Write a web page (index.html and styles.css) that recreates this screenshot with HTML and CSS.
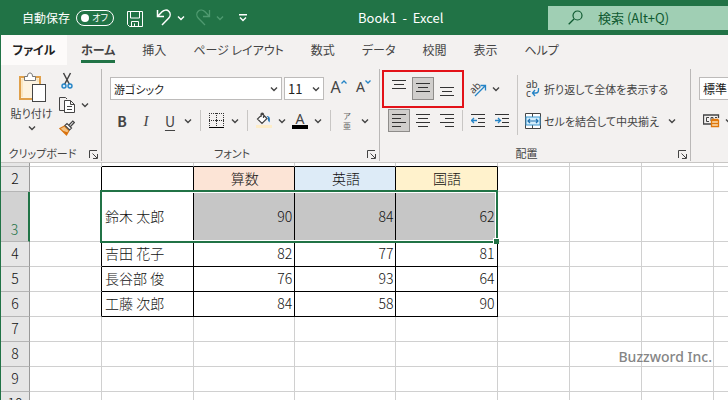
FILE: index.html
```html
<!DOCTYPE html>
<html lang="ja">
<head>
<meta charset="utf-8">
<title>Book1 - Excel</title>
<link rel="stylesheet" href="styles.css">
</head>
<body>
<svg class="defs" aria-hidden="true">
  <symbol id="chev" viewBox="0 0 8 8"><path d="M1 2.5L4 5.5L7 2.5" fill="none" stroke="currentColor" stroke-width="1.4"/></symbol>
  <symbol id="launch" viewBox="0 0 9 9"><path d="M.5 8V.5H8M3.5 3.5L8 8M8.5 4V8.5H4" fill="none" stroke="currentColor"/></symbol>
</svg>
<div class="app">
  <header class="titlebar">
    <label class="autosave" for="autosave">自動保存</label>
    <span class="switch"><input type="checkbox" id="autosave" role="switch"><span class="knob"></span><span class="off">オフ</span></span>
    <button class="tb save" aria-label="上書き保存"><svg width="16" height="16" viewBox="0 0 16 16"><path d="M.5.5H15.5V15.5H2.500L.5 13.500ZM3.500.5V7H12.500V.5M4.500 15.500V10.500H11.500V15.500M7.500 15V12.500" fill="none" stroke="currentColor"/></svg></button>
    <button class="tb undo" aria-label="元に戻す"><svg width="16" height="17" viewBox="0 0 16 17"><path d="M1.500 1V7.500H8M1.500 7.500L6 2.800C8 .8 11 .5 12.800 2.300C14.800 4.300 14.500 7.300 12.600 9.300L6 16" fill="none" stroke="currentColor" stroke-width="1.500"/></svg></button>
    <button class="tb drop" aria-label="元に戻す履歴"><svg width="8" height="8"><use href="#chev"/></svg></button>
    <button class="tb redo dim" aria-label="やり直し"><svg width="16" height="17" viewBox="0 0 16 17"><path d="M14.500 1V7.500H8M14.500 7.500L10 2.800C8 .8 5 .5 3.200 2.300C1.200 4.300 1.500 7.300 3.400 9.300L10 16" fill="none" stroke="currentColor" stroke-width="1.300"/></svg></button>
    <button class="tb drop dim" aria-label="やり直し履歴"><svg width="8" height="8"><use href="#chev"/></svg></button>
    <button class="tb custom" aria-label="クイック アクセス ツール バーのユーザー設定"><svg width="8" height="8" viewBox="0 0 8 8"><path d="M0 .8H8M1 3.500L4 6.500L7 3.500" fill="none" stroke="currentColor" stroke-width="1.400"/></svg></button>
    <h1 class="doc">Book1&nbsp; -&nbsp; Excel</h1>
    <label class="search"><svg width="15" height="15" viewBox="0 0 15 15"><circle cx="9.500" cy="5.500" r="4.500" fill="none" stroke="currentColor" stroke-width="1.200"/><path d="M6 9L.7 14.300" stroke="currentColor" stroke-width="1.300"/></svg><input type="text" placeholder="検索 (Alt+Q)" aria-label="検索"></label>
  </header>

  <nav class="tabs">
    <a href="#" class="file">ファイル</a>
    <a href="#" class="on">ホーム</a>
    <a href="#">挿入</a>
    <a href="#">ページ レイアウト</a>
    <a href="#">数式</a>
    <a href="#">データ</a>
    <a href="#">校閲</a>
    <a href="#">表示</a>
    <a href="#">ヘルプ</a>
  </nav>

  <div class="ribbon">
    <section class="group clip">
      <div class="tools cliptools">
        <button class="paste">
          <svg width="28" height="30" viewBox="0 0 28 30"><rect x="2" y="5" width="20" height="22" fill="#fdf3e0" stroke="#e0a04a" stroke-width="2"/><path d="M4 25V7H20V10" fill="none" stroke="#f8d9a0"/><path d="M6.500 4.500H9.500C9.500 2 10.500 1 12 1S14.500 2 14.500 4.500H17.500V8.500H6.500Z" fill="#fff" stroke="#777"/><rect x="14.500" y="12.500" width="13" height="17" fill="#fff" stroke="#444"/></svg>
          <span>貼り付け</span>
          <svg width="8" height="8"><use href="#chev"/></svg>
        </button>
        <div class="clipcol">
          <button aria-label="切り取り"><svg width="16" height="18" viewBox="0 0 16 18"><path d="M4.500 1L10.500 12.500M11.500 1L5.500 12.500" stroke="#444" stroke-width="1.500" fill="none"/><circle cx="5" cy="14" r="2" fill="#d5eaf8" stroke="#2584c6" stroke-width="1.400"/><circle cx="11" cy="14" r="2" fill="#d5eaf8" stroke="#2584c6" stroke-width="1.400"/></svg></button>
          <span class="pair"><button aria-label="コピー"><svg width="16" height="16" viewBox="0 0 16 16"><path d="M5 13.500H.5V.5H6.500L8 2" fill="none" stroke="#444"/><path d="M5.500 3.500H11.500L15.500 7.500V15.500H5.500ZM11.500 3.500V7.500H15.500M8 9.500H13M8 12.500H13" fill="#fff" stroke="#444"/></svg></button><button class="arrow" aria-label="コピーのオプション"><svg width="8" height="8"><use href="#chev"/></svg></button></span>
          <button aria-label="書式のコピー"><svg width="16" height="16" viewBox="0 0 16 16"><path d="M5.500 6L10 10.500L7.500 15L.8 8.500Z" fill="#f3c384" stroke="#d97b1c" stroke-width="1.200"/><path d="M3 10.500L9 12.500L7.500 15Z" fill="#d9700d"/><path d="M6 5.500L8 3.500L12.500 8L10.500 10ZM10 5L13.800 1L15.300 2.500L11.500 6.500" fill="#fff" stroke="#444" stroke-width="1.200"/></svg></button>
        </div>
      </div>
      <div class="caption"><span>クリップボード</span><button class="launcher" aria-label="クリップボードの詳細"><svg width="9" height="9"><use href="#launch"/></svg></button></div>
    </section>

    <section class="group font">
      <div class="tools">
        <div class="row">
          <span class="combo name"><select aria-label="フォント"><option>游ゴシック</option></select><svg width="8" height="8"><use href="#chev"/></svg></span>
          <span class="combo size"><select aria-label="フォント サイズ"><option>11</option></select><svg width="8" height="8"><use href="#chev"/></svg></span>
          <button class="btn grow" aria-label="フォント サイズの拡大"><span class="bigA">A</span><svg width="6" height="4" viewBox="0 0 6 4"><path d="M.5 3.500L3 1L5.500 3.500" fill="none" stroke="#2584c6" stroke-width="1.300"/></svg></button>
          <button class="btn grow" aria-label="フォント サイズの縮小"><span class="smallA">A</span><svg width="6" height="4" viewBox="0 0 6 4"><path d="M.5.5L3 3L5.500.5" fill="none" stroke="#2584c6" stroke-width="1.300"/></svg></button>
        </div>
        <div class="row">
          <button class="btn glyph bold" aria-label="太字">B</button><button class="btn glyph ital" aria-label="斜体">I</button><button class="btn glyph under" aria-label="下線">U</button><button class="arrow" aria-label="下線の種類"><svg width="8" height="8"><use href="#chev"/></svg></button>
          <span class="sep"></span>
          <button class="btn" aria-label="罫線"><svg width="16" height="16" viewBox="0 0 16 16"><path d="M0 .5H15M0 7.500H15" stroke="#333" stroke-dasharray="1 1" fill="none"/><path d="M.5 0V13M7.500 0V13M14.500 0V13" stroke="#333" stroke-dasharray="1 1" fill="none"/><path d="M6 7.500H9M7.500 6V9" stroke="#333"/><path d="M0 14.500H15" stroke="#000"/></svg></button><button class="arrow" aria-label="罫線の種類"><svg width="8" height="8"><use href="#chev"/></svg></button>
          <span class="sep"></span>
          <button class="btn" aria-label="塗りつぶしの色"><svg width="18" height="17" viewBox="0 0 18 17"><path d="M7.500 2L12 6.500L7 11.500L2.500 7ZM6 5V2.500C6 .5 8.500.5 8.500 2.500V6" fill="#fff" stroke="#444" stroke-width="1.200"/><path d="M11.500 4C14.500 4 15.500 6 14.500 10.500C12.800 9 12.500 7 13 5.500Z" fill="#2073b5"/><path d="M1 13H17V16H1Z" fill="#fdedc8"/></svg></button><button class="arrow" aria-label="塗りつぶしの色を選択"><svg width="8" height="8"><use href="#chev"/></svg></button>
          <button class="btn color" aria-label="フォントの色"><span>A</span></button><button class="arrow" aria-label="フォントの色を選択"><svg width="8" height="8"><use href="#chev"/></svg></button>
          <span class="sep"></span>
          <button class="btn ruby" aria-label="ふりがな"><span>ア</span><span>亜</span></button><button class="arrow" aria-label="ふりがなの設定"><svg width="8" height="8"><use href="#chev"/></svg></button>
        </div>
      </div>
      <div class="caption"><span>フォント</span><button class="launcher" aria-label="フォントの設定"><svg width="9" height="9"><use href="#launch"/></svg></button></div>
    </section>

    <section class="group align">
      <div class="tools split">
        <div class="left">
          <div class="row">
            <button class="btn" aria-label="上揃え"><svg width="14" height="19" viewBox="0 0 14 19"><path d="M0 1.500H14M2 5.500H12M0 9.500H14" stroke="#333"/></svg></button><button class="btn pressed" aria-label="上下中央揃え"><svg width="14" height="19" viewBox="0 0 14 19"><path d="M0 4.500H14M2 8.500H12M0 12.500H14" stroke="#333"/></svg></button><button class="btn" aria-label="下揃え"><svg width="14" height="19" viewBox="0 0 14 19"><path d="M0 8.500H14M2 12.500H12M0 16.500H14" stroke="#333"/></svg></button>
            <span class="sep none"></span>
            <button class="btn" aria-label="方向"><svg class="open" width="18" height="18" viewBox="0 0 18 18"><text x="0" y="12" transform="rotate(-45 5 8)" class="abt">ab</text><path d="M6 16L16 6M11.500 5.500H16.500V10.500" fill="none" stroke="#2584c6" stroke-width="1.300"/></svg></button><button class="arrow" aria-label="方向のオプション"><svg width="8" height="8"><use href="#chev"/></svg></button>
          </div>
          <div class="row">
            <button class="btn pressed" aria-label="左揃え"><svg width="14" height="13" viewBox="0 0 14 13"><path d="M0 .5H14M0 4.500H9M0 8.500H14M0 12.500H9" stroke="#333"/></svg></button><button class="btn" aria-label="中央揃え"><svg width="14" height="13" viewBox="0 0 14 13"><path d="M0 .5H14M2 4.500H12M0 8.500H14M2 12.500H12" stroke="#333"/></svg></button><button class="btn" aria-label="右揃え"><svg width="14" height="13" viewBox="0 0 14 13"><path d="M0 .5H14M5 4.500H14M0 8.500H14M5 12.500H14" stroke="#333"/></svg></button>
            <span class="sep"></span>
            <button class="btn" aria-label="インデントを減らす"><svg width="14" height="13" viewBox="0 0 14 13"><path d="M0 .5H14M7 4.500H14M7 8.500H14M0 12.500H14" stroke="#333"/><path d="M6 6.500H.5M3 4L.5 6.500L3 9" fill="none" stroke="#2584c6" stroke-width="1.300"/></svg></button><button class="btn" aria-label="インデントを増やす"><svg width="14" height="13" viewBox="0 0 14 13"><path d="M0 .5H14M7 4.500H14M7 8.500H14M0 12.500H14" stroke="#333"/><path d="M0 6.500H5.500M3 4L5.500 6.500L3 9" fill="none" stroke="#2584c6" stroke-width="1.300"/></svg></button>
          </div>
        </div>
        <div class="right">
          <button class="wide"><svg class="open" width="16" height="18" viewBox="0 0 16 18"><text x="1" y="8" class="wrapt">ab</text><text x="1" y="17" class="wrapt">c</text><path d="M13.500 8V10C13.500 12 13 13 11 13H7.500M10 10L7.500 13L10 16" fill="none" stroke="#2584c6" stroke-width="1.300"/></svg><span>折り返して全体を表示する</span></button>
          <button class="wide"><svg width="16" height="16" viewBox="0 0 16 16"><path d="M.5.500H15.500V15.500H.5ZM7.500.5V4M7.500 12V15.500" fill="#fff" stroke="#444"/><rect x="1" y="4" width="14" height="8" fill="#d5eefb" stroke="#3a96d0"/><path d="M3 8H13M5 6L3 8L5 10M11 6L13 8L11 10" fill="none" stroke="#2071b0" stroke-width="1.200"/></svg><span>セルを結合して中央揃え</span><svg width="8" height="8" class="wchev"><use href="#chev"/></svg></button>
        </div>
      </div>
      <div class="caption"><span>配置</span><button class="launcher" aria-label="配置の設定"><svg width="9" height="9"><use href="#launch"/></svg></button></div>
      <div class="highlight"></div>
    </section>

    <section class="group num">
      <div class="tools">
        <div class="row"><span class="combo fmt"><select aria-label="表示形式"><option>標準</option></select></span></div>
        <div class="row"><button class="btn" aria-label="通貨表示形式"><svg width="17" height="14" viewBox="0 0 17 14"><path d="M15.500 4V1H.5V10H8" fill="none" stroke="#444" stroke-width="1.300"/><path d="M6 3.500H3.500V7.500H6M10 7V3.500H8V7M12 3.500H14" fill="none" stroke="#444"/><path d="M8.500 6.500V12.500H15.500V6.500Z" fill="#fbe0b8" stroke="#e0780c" stroke-width="1.300"/><path d="M8.500 5.500H15.500M9 9.500H15.500" stroke="#e0780c" stroke-width="1.300"/></svg></button><button class="arrow" aria-label="通貨の種類"><svg width="8" height="8"><use href="#chev"/></svg></button></div>
      </div>
    </section>
  </div>

  <main class="sheet">
    <table>
      <colgroup><col class="ch"><col class="cs"><col class="cb"><col class="cd"><col class="cd"><col class="cd"><col class="cs"><col class="cs"><col class="cs"><col class="cs"></colgroup>
      <tbody>
        <tr class="r1"><th></th><td></td><td class="bb"></td><td class="bb"></td><td class="bb"></td><td class="bb"></td><td></td><td></td><td></td><td></td></tr>
        <tr><th scope="row">2</th><td class="br"></td><td class="k"></td><td class="k h peach">算数</td><td class="k h blue">英語</td><td class="k h cream">国語</td><td></td><td></td><td></td><td></td></tr>
        <tr class="r3"><th scope="row">3</th><td class="br"></td><td class="k">鈴木 太郎</td><td class="k n sel">90</td><td class="k n sel">84</td><td class="k n sel">62</td><td></td><td></td><td></td><td></td></tr>
        <tr><th scope="row">4</th><td class="br"></td><td class="k">吉田 花子</td><td class="k n">82</td><td class="k n">77</td><td class="k n">81</td><td></td><td></td><td></td><td></td></tr>
        <tr><th scope="row">5</th><td class="br"></td><td class="k">長谷部 俊</td><td class="k n">76</td><td class="k n">93</td><td class="k n">64</td><td></td><td></td><td></td><td></td></tr>
        <tr><th scope="row">6</th><td class="br"></td><td class="k">工藤 次郎</td><td class="k n">84</td><td class="k n">58</td><td class="k n">90</td><td></td><td></td><td></td><td></td></tr>
        <tr><th scope="row">7</th><td></td><td></td><td></td><td></td><td></td><td></td><td></td><td></td><td></td></tr>
        <tr><th scope="row">8</th><td></td><td></td><td></td><td></td><td></td><td></td><td></td><td></td><td></td></tr>
        <tr><th scope="row">9</th><td></td><td></td><td></td><td></td><td></td><td></td><td></td><td></td><td></td></tr>
        <tr><th scope="row">10</th><td></td><td></td><td></td><td></td><td></td><td></td><td></td><td></td><td></td></tr>
      </tbody>
    </table>
    <div class="selection"><span class="handle"></span></div>
    <div class="mark">Buzzword Inc.</div>
  </main>
</div>
</body>
</html>
```
FILE: styles.css
```css
* { box-sizing: border-box; }
body {
  margin: 0;
  font-family: "Noto Sans CJK JP", "Noto Sans", sans-serif;
  font-size: 11px;
  font-weight: 400;
  line-height: 16px;
  font-feature-settings: "palt";
  color: #444;
}
button, input, select { font: inherit; font-feature-settings: inherit; color: inherit; }
button { display: flex; align-items: center; justify-content: center; padding: 0; border: 0; background: none; white-space: nowrap; }
svg { display: block; flex: none; }
.open { overflow: visible; }
.defs { position: absolute; width: 0; height: 0; }
.app { display: flex; flex-direction: column; height: 100vh; overflow: hidden; border-left: 1px solid #217346; background: #f3f1f0; }

.titlebar { display: flex; align-items: center; flex: none; height: 35px; background: #217346; color: #fff; }
.autosave { width: 48px; margin-left: 21px; font-size: 12px; white-space: nowrap; }
.switch { position: relative; display: flex; align-items: center; justify-content: space-between; width: 38px; height: 16px; margin-left: 6px; padding: 0 5px 0 4px; border: 1px solid #fff; border-radius: 8px; }
.switch input { position: absolute; inset: 0; width: 100%; height: 100%; margin: 0; opacity: 0; }
.knob { width: 8px; height: 8px; border-radius: 50%; background: #fff; }
.off { font-size: 9px; line-height: 12px; }
.save { margin-left: 13px; margin-top: 2px; }
.undo { margin-left: 13px; }
.drop { margin-left: 5px; }
.redo { margin-left: 10px; }
.custom { margin-left: 15px; }
.dim { color: #4f9a70; }
.doc { flex: 1; margin: 0 0 0 111px; font-size: 13px; font-weight: 400; white-space: nowrap; }
.search { display: flex; align-items: center; flex: none; width: 180px; height: 24px; padding-left: 20px; background: #a0cfb4; color: #0f5a31; }
.search input { flex: 1; min-width: 0; margin-left: 15px; padding: 0; border: 0; background: none; font-size: 13px; outline: 0; }
.search input::placeholder { color: #0f5a31; opacity: 1; }

.tabs { display: flex; flex: none; height: 31px; font-size: 12px; line-height: 30px; }
.tabs a { margin-right: 27px; color: #444; text-decoration: none; white-space: nowrap; }
.tabs .file { width: 66px; height: 30px; margin-right: 14px; background: #fdfbfa; color: #222; font-weight: 700; text-align: center; }
.tabs .on { height: 28px; border-bottom: 3px solid #217346; font-weight: 700; }

.ribbon { display: flex; flex: none; height: 97px; border-bottom: 1px solid #c8c6c4; overflow: hidden; }
.group { position: relative; display: flex; flex-direction: column; flex: none; height: 92px; margin-top: 3px; border-right: 1px solid #bab8b7; }
.group:last-child { border-right: 0; }
.clip { width: 101px; }
.font { width: 278px; }
.align { width: 311px; }
.num { flex: 1; }
.tools { flex: 1; padding: 8px 0 0 8px; }
.row { display: flex; align-items: center; height: 23px; margin-bottom: 9px; }
.caption { position: relative; display: flex; justify-content: center; height: 16px; padding-right: 17px; }
.launcher { position: absolute; right: 3px; top: 5px; }

.cliptools { display: flex; padding: 3px 0 0 8px; }
.paste { flex-direction: column; justify-content: flex-start; width: 45px; }
.paste span { margin: 3px 0; }
.clipcol { display: flex; flex-direction: column; gap: 7px; margin-left: 5px; }
.pair { display: flex; gap: 4px; }
.clipcol > button { width: 16px; }

.combo { position: relative; height: 23px; border: 1px solid #bdbbba; background: #fff; }
.combo select { width: 100%; height: 21px; padding: 0 3px; border: 0; background: none; color: #222; appearance: none; }
.combo svg { position: absolute; right: 3px; top: 7px; pointer-events: none; }
.name { width: 172px; }
.size { width: 40px; margin: 0 2px; }
.size select { font-size: 13px; }
.fmt { width: 100px; }
.fmt select { font-size: 12px; }
.btn { flex: none; width: 24px; height: 23px; }
.arrow { flex: none; width: 12px; height: 16px; }
.sep { width: 1px; height: 21px; margin: 0 4px 0 6px; background: #c8c6c4; }
.none { background: none; }
.grow { align-items: flex-start; width: 25px; }
.bigA, .smallA { font-family: "Noto Sans", sans-serif; line-height: 20px; }
.bigA { font-size: 16px; }
.smallA { font-size: 14px; }
.grow svg { margin-top: 3px; }
.glyph { font-size: 14px; }
.bold { font-weight: 700; }
.ital { font-family: "Liberation Serif", serif; font-style: italic; font-size: 15px; }
.under { text-decoration: underline; text-underline-offset: 3px; }
.color span { width: 16px; height: 17px; border-bottom: 4px solid #000; font-family: "Noto Sans", sans-serif; font-size: 14px; line-height: 13px; }
.ruby { flex-direction: column; color: #666; font-size: 8px; line-height: 10px; }

.split { display: flex; padding-left: 7px; }
.left { width: 127px; margin-right: 3px; }
.left .sep { margin: 0 3px; }
.pressed { width: 22px; margin: 0 1px; border: 1px solid #8e8c8a; background: #d0cecc; }
.right { height: 60px; margin-top: -2px; border-left: 1px solid #c8c6c4; }
.wide { height: 23px; margin: 2px 0 0 7px; }
.wide + .wide { margin-top: 9px; }
.wide span { margin-left: 3px; }
.wide .wchev { margin-left: 9px; }
.abt, .wrapt { font: 400 10px "Noto Sans", sans-serif; fill: #444; }
.highlight { position: absolute; left: 2px; top: 1px; width: 82px; height: 38px; border: 2px solid #e31219; pointer-events: none; }

.sheet { position: relative; flex: 1; min-height: 0; overflow: hidden; background: #fff; }
table { width: 785px; border-spacing: 0; table-layout: fixed; color: #111; font-size: 14px; font-weight: 300; line-height: 20px; font-feature-settings: normal; }
.ch { width: 29px; }
.cs { width: 72px; }
.cb { width: 92px; }
.cd { width: 101px; }
tr { height: 25px; }
.r1 { height: 4px; font-size: 0; line-height: 0; }
.r3 { height: 50px; }
th, td { padding: 0 0 2px; border: solid #d0d0d0; border-width: 0 1px 1px 0; white-space: nowrap; }
.r1 th, .r1 td { padding: 0; }
th { border-color: #c4c4c4 #999 #b5b5b5; background: #e6e6e6; font-weight: 300; }
.r3 th { border-right: 2px solid #217346; background: #d2d2d2; color: #217346; vertical-align: bottom; }
.bb { border-bottom-color: #000; }
.br { border-right-color: #000; }
.k { padding: 0 2px 2px 3px; border-color: #000; }
.h { text-align: center; }
.n { text-align: right; }
.peach { background: #fce4d6; }
.blue { background: #ddebf7; }
.cream { background: #fff2cc; }
.sel { background: #c6c6c6; }
.selection { position: absolute; left: 99px; top: 27px; width: 398px; height: 53px; border: 2px solid #217346; box-shadow: inset 0 0 0 1px #fff; pointer-events: none; }
.handle { position: absolute; right: -3px; bottom: -3px; width: 6px; height: 6px; border: solid #fff; border-width: 1px 0 0 1px; background: #217346; }
.mark { position: absolute; right: 16px; bottom: 34px; color: #858585; font: 500 14px/18px "Noto Sans", sans-serif; }
```
